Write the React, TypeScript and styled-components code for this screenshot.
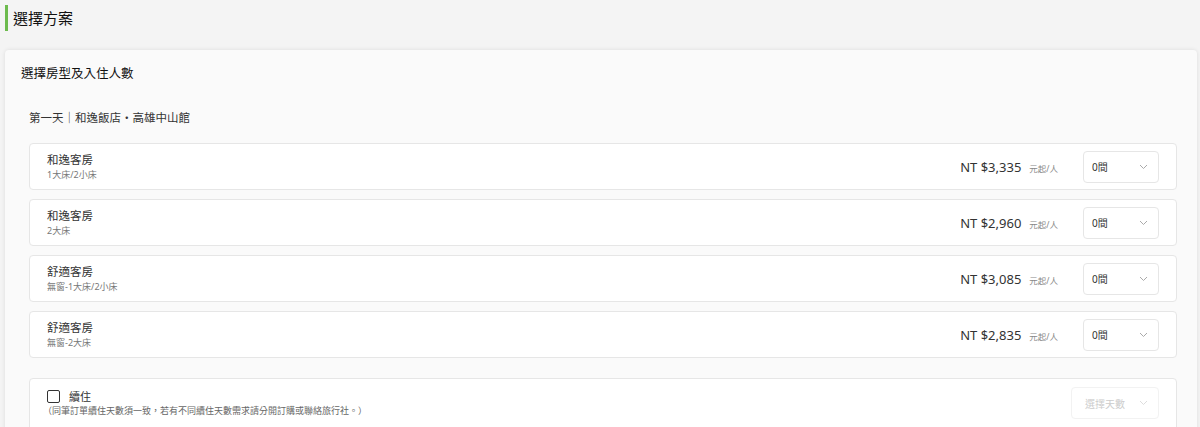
import React from "react";
import styled, {createGlobalStyle} from "styled-components";

const GlobalStyle = createGlobalStyle`
  html, body {
    margin: 0;
    padding: 0;
    background: #f4f4f4;
    font-family: "Noto Sans", "Noto Sans CJK TC", sans-serif;
    color: #333;
  }
`;

type Room = {
  name: string;
  bed: string;
  price: string;
};

const rooms: Room[] = [
  {name: "和逸客房", bed: "1大床/2小床", price: "NT $3,335"},
  {name: "和逸客房", bed: "2大床", price: "NT $2,960"},
  {name: "舒適客房", bed: "無窗-1大床/2小床", price: "NT $3,085"},
  {name: "舒適客房", bed: "無窗-2大床", price: "NT $2,835"},
];

const Page = styled.div`
  padding: 5px 3px 0 5px;
  height: 427px;
  overflow: hidden;
  box-sizing: border-box;
`;

const PageTitle = styled.h2`
  margin: 0;
  height: 26px;
  line-height: 26px;
  padding-left: 5px;
  border-left: 3px solid #6dbb4e;
  font-size: 15px;
  font-weight: 400;
  color: #111;
`;

const Card = styled.section`
  margin-top: 19px;
  background: #fafafa;
  border-radius: 4px;
  box-shadow: 0 0 4px rgba(0, 0, 0, 0.1);
  padding: 15px 20px 20px 16px;
`;

const CardTitle = styled.h3`
  margin: 0;
  font-size: 12.5px;
  font-weight: 400;
  line-height: 18px;
  color: #111;
`;

const Day = styled.div`
  padding-left: 8px;
  margin-top: 27px;
`;

const DayTitle = styled.div`
  font-size: 11.5px;
  line-height: 16px;
  color: #333;
  margin-bottom: 17px;
`;

const List = styled.div`
  display: flex;
  flex-direction: column;
  gap: 9px;
`;

const Row = styled.div<{$tall?: boolean}>`
  display: flex;
  align-items: ${(p) => (p.$tall ? "flex-start" : "center")};
  justify-content: space-between;
  background: #fff;
  border: 1px solid #e6e6e6;
  border-radius: 4px;
  height: ${(p) => (p.$tall ? "56px" : "47px")};
  box-sizing: border-box;
  padding: ${(p) => (p.$tall ? "8px 17px 0" : "0 17px")};
`;

const RoomInfo = styled.div`
  display: flex;
  flex-direction: column;
  gap: 2px;
`;

const RoomName = styled.div`
  font-size: 11.5px;
  line-height: 15px;
  color: #333;
`;

const RoomBed = styled.div`
  font-size: 9px;
  line-height: 12px;
  color: #777;
`;

const RightSide = styled.div`
  display: flex;
  align-items: center;
`;

const Price = styled.span`
  font-size: 13px;
  font-weight: 400;
  color: #333;
`;

const Unit = styled.span`
  font-size: 8.5px;
  color: #888;
  margin-left: 8px;
  margin-right: 25px;
  padding-top: 3px;
`;

const Select = styled.div<{$width: number; $disabled?: boolean}>`
  width: ${(p) => p.$width}px;
  height: 32px;
  box-sizing: border-box;
  border: 1px solid ${(p) => (p.$disabled ? "#f2f2f2" : "#e6e6e6")};
  border-radius: 4px;
  display: flex;
  align-items: center;
  justify-content: space-between;
  padding: 0 10px 0 ${(p) => (p.$disabled ? 13 : 8)}px;
  font-size: 10px;
  color: ${(p) => (p.$disabled ? "#ccc" : "#333")};
  background: #fff;
`;

const Extend = styled.div`
  margin-top: 20px;
`;

const ExtendInfo = styled.div`
  display: flex;
  flex-direction: column;
  gap: 0;
  padding-top: 2px;
`;

const CheckLine = styled.label`
  display: flex;
  align-items: center;
  gap: 9px;
  font-size: 11px;
  line-height: 15px;
  color: #333;
`;

const Box = styled.span`
  width: 11px;
  height: 11px;
  border: 1px solid #333;
  border-radius: 2px;
  background: #fff;
`;

const Note = styled.div`
  font-size: 9px;
  line-height: 13px;
  color: #666;
  margin-left: -4px;
`;

const Chevron: React.FC<{color: string}> = ({color}) => (
  <svg width="9" height="6" viewBox="0 0 9 6" fill="none">
    <path d="M1 1l3.5 3.5L8 1" stroke={color} strokeWidth="1" />
  </svg>
);

const App: React.FC = () => (
  <Page>
    <GlobalStyle />
    <PageTitle>選擇方案</PageTitle>
    <Card>
      <CardTitle>選擇房型及入住人數</CardTitle>
      <Day>
        <DayTitle>第一天｜和逸飯店・高雄中山館</DayTitle>
        <List>
          {rooms.map((room, i) => (
            <Row key={i}>
              <RoomInfo>
                <RoomName>{room.name}</RoomName>
                <RoomBed>{room.bed}</RoomBed>
              </RoomInfo>
              <RightSide>
                <Price>{room.price}</Price>
                <Unit>元起/人</Unit>
                <Select $width={76}>
                  <span>0間</span>
                  <Chevron color="#aaa" />
                </Select>
              </RightSide>
            </Row>
          ))}
        </List>
        <Extend>
          <Row $tall>
            <ExtendInfo>
              <CheckLine>
                <Box />
                續住
              </CheckLine>
              <Note>（同筆訂單續住天數須一致，若有不同續住天數需求請分開訂購或聯絡旅行社。）</Note>
            </ExtendInfo>
            <Select $width={88} $disabled>
              <span>選擇天數</span>
              <Chevron color="#ddd" />
            </Select>
          </Row>
        </Extend>
      </Day>
    </Card>
  </Page>
);

export default App;
